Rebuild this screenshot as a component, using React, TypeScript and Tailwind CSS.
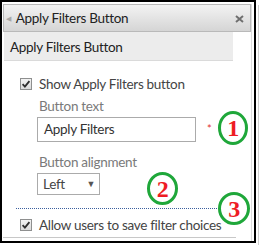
import React from "react";

const font = { fontFamily: 'Lato, "Open Sans", sans-serif' };

function CheckBox() {
  return (
    <svg width="12" height="12" viewBox="0 0 12 12" className="shrink-0">
      <defs>
        <linearGradient id="cbg" x1="0" y1="0" x2="0" y2="1">
          <stop offset="0" stopColor="#f4f4f4" />
          <stop offset="1" stopColor="#d9d9d9" />
        </linearGradient>
      </defs>
      <rect x="0.5" y="0.5" width="11" height="11" fill="url(#cbg)" stroke="#8e8f8f" />
      <path d="M2.6 6.2 L4.9 8.6 L9.4 3.1" fill="none" stroke="#2d2d2d" strokeWidth="1.8" />
    </svg>
  );
}

function CloseIcon() {
  return (
    <svg width="9" height="8" viewBox="0 0 9 8" className="shrink-0">
      <path d="M1 1 L8 7 M8 1 L1 7" stroke="#6f6f6f" strokeWidth="2" />
    </svg>
  );
}

function Marker({ n, className }: { n: string; className: string }) {
  return (
    <div
      className={`absolute flex items-center justify-center rounded-[50%] border-[3px] border-[#1fa73a] text-[#ee1c24] font-bold text-[24px] leading-none ${className}`}
      style={{ fontFamily: '"Liberation Serif", serif' }}
    >
      {n}
    </div>
  );
}

export default function App() {
  return (
    <div className="relative flex w-[260px] h-[245px] bg-white tracking-[-0.3px]" style={font}>
      <div className="w-[256px] h-[243px] border-2 border-black pt-[2px] pl-px pr-[2px] flex flex-col">
        <div className="flex-1 flex flex-col border-r border-[#dcdcdc]">
          <div className="h-[28px] shrink-0 flex items-center border border-[#b9b9b9] bg-gradient-to-b from-[#f3f3f3] to-[#d5d5d5]">
            <span className="text-[#a8a8a8] text-[7px] ml-[2px] mr-[5px]">◀</span>
            <span className="text-[13.5px] text-[#222]">Apply Filters Button</span>
            <span className="ml-auto mr-[6px] mt-px">
              <CloseIcon />
            </span>
          </div>
          <div className="h-[29px] shrink-0 w-[229px] ml-px flex items-center pl-[6px] pt-[2px] bg-[#ececec] border-b border-[#dadada] text-[13.5px] text-[#222]">
            Apply Filters Button
          </div>
          <div className="pl-[17px] flex flex-col text-[13.5px]">
            <div className="mt-[13px] h-[20px] flex items-center gap-[7px]">
              <CheckBox />
              <span className="text-[#444]">Show Apply Filters button</span>
            </div>
            <div className="mt-[2px] h-[20px] flex items-center pl-[19px] text-[#7a7a7a]">Button text</div>
            <div className="mt-px flex items-center pl-[17px]">
              <div className="w-[159px] h-[25px] border border-[#ababab] flex items-center pl-[6px] text-[#333]">
                Apply Filters
              </div>
              <span className="ml-[11px] text-[#e03030] text-[11px]">*</span>
            </div>
            <div className="mt-[10px] h-[20px] flex items-center pl-[19px] text-[#7a7a7a]">Button alignment</div>
            <div className="mt-px pl-[17px]">
              <div className="w-[63px] h-[22px] border border-[#ababab] flex items-center pl-[5px] pr-[4px] text-[#444]">
                <span>Left</span>
                <span className="ml-auto text-[9px] text-[#555]">▼</span>
              </div>
            </div>
          </div>
          <div className="mt-[13px] ml-[13px] mr-[34px] border-t border-dotted border-[#3b5f9e]" />
          <div className="pl-[17px] mt-[6px] h-[20px] flex items-center gap-[7px] text-[13.5px]">
            <CheckBox />
            <span className="text-[#444]">Allow users to save filter choices</span>
          </div>
          <div className="mt-[2px] w-[233px] border-t border-[#c8c8c8]" />
        </div>
      </div>
      <div className="ml-[2px] mt-[5px] w-px h-[240px] bg-[#cfcfcf]" />
      <Marker n="1" className="left-[218px] top-[111px] w-[30px] h-[34px]" />
      <Marker n="2" className="left-[147px] top-[172px] w-[31px] h-[33px]" />
      <Marker n="3" className="left-[218px] top-[192px] w-[32px] h-[33px]" />
    </div>
  );
}
